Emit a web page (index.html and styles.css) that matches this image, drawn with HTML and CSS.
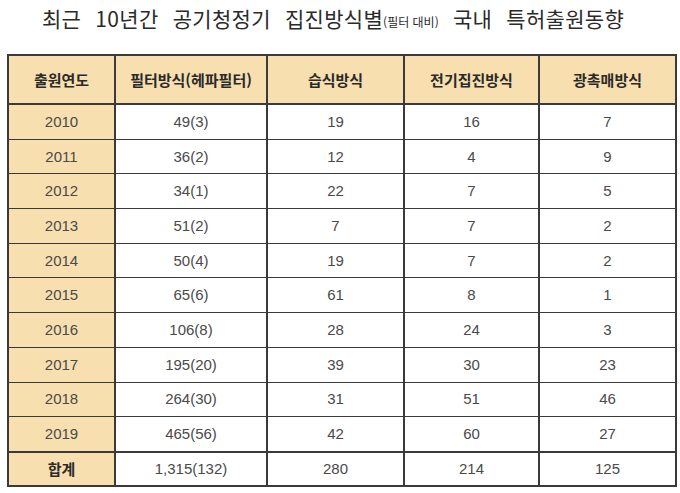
FILE: index.html
```html
<!DOCTYPE html>
<html lang="ko">
<head>
<meta charset="utf-8">
<link rel="stylesheet" href="styles.css">
</head>
<body>
<h1 class="title">최근 10년간 공기청정기 집진방식별<span class="small">(필터 대비)</span> 국내 특허출원동향</h1>
<table class="stats">
  <colgroup>
    <col class="c1"><col class="c2"><col class="c3"><col class="c4"><col class="c5">
  </colgroup>
  <thead>
    <tr><th>출원연도</th><th>필터방식(헤파필터)</th><th>습식방식</th><th>전기집진방식</th><th>광촉매방식</th></tr>
  </thead>
  <tbody>
    <tr><td class="yr">2010</td><td>49(3)</td><td>19</td><td>16</td><td>7</td></tr>
    <tr><td class="yr">2011</td><td>36(2)</td><td>12</td><td>4</td><td>9</td></tr>
    <tr><td class="yr">2012</td><td>34(1)</td><td>22</td><td>7</td><td>5</td></tr>
    <tr><td class="yr">2013</td><td>51(2)</td><td>7</td><td>7</td><td>2</td></tr>
    <tr><td class="yr">2014</td><td>50(4)</td><td>19</td><td>7</td><td>2</td></tr>
    <tr><td class="yr">2015</td><td>65(6)</td><td>61</td><td>8</td><td>1</td></tr>
    <tr><td class="yr">2016</td><td>106(8)</td><td>28</td><td>24</td><td>3</td></tr>
    <tr><td class="yr">2017</td><td>195(20)</td><td>39</td><td>30</td><td>23</td></tr>
    <tr><td class="yr">2018</td><td>264(30)</td><td>31</td><td>51</td><td>46</td></tr>
    <tr><td class="yr">2019</td><td>465(56)</td><td>42</td><td>60</td><td>27</td></tr>
    <tr class="total"><td class="yr">합계</td><td>1,315(132)</td><td>280</td><td>214</td><td>125</td></tr>
  </tbody>
</table>
</body>
</html>
```
FILE: styles.css
```css
html, body {
  margin: 0;
  padding: 0;
  background: #ffffff;
}
body {
  width: 680px;
  height: 493px;
  overflow: hidden;
}
.title {
  margin: 0;
  height: 54px;
  padding-top: 4px;
  box-sizing: border-box;
  text-align: center;
  padding-right: 14px;
  font-family: "Noto Sans CJK KR", sans-serif;
  font-weight: 400;
  font-size: 21px;
  line-height: 28px;
  color: #2a2a2a;
  word-spacing: 8px;
  letter-spacing: 0.3px;
}
.title .small {
  font-size: 12px;
  word-spacing: 0;
  letter-spacing: 0;
}
.stats {
  margin-left: 7px;
  width: 668px;
  border-collapse: collapse;
  table-layout: fixed;
  border: 2px solid #3a3a3a;
}
.c1 { width: 107px; }
.c2 { width: 152px; }
.c3 { width: 137px; }
.c4 { width: 135px; }
.c5 { width: 137px; }
.stats th, .stats td {
  border: 1px solid #3a3a3a;
  border-left-width: 2px;
  border-right-width: 2px;
  text-align: center;
  padding: 0;
  line-height: 18px;
}
.stats th {
  height: 47px;
  background: #f8dfaf;
  font-family: "Noto Sans CJK KR", sans-serif;
  font-weight: 700;
  font-size: 15px;
  color: #2a2a2a;
  border-bottom-width: 2px;
}
.stats td {
  height: 33.7px;
  font-family: "Liberation Sans", Arial, sans-serif;
  font-size: 15px;
  color: #4a4a4a;
  background: #ffffff;
}
.stats td.yr {
  background: #f8dfaf;
}
.stats tr.total td {
  height: 32px;
  border-top-width: 2px;
}
.stats tr.total td.yr {
  font-family: "Noto Sans CJK KR", sans-serif;
  font-weight: 700;
  color: #2a2a2a;
}
```
